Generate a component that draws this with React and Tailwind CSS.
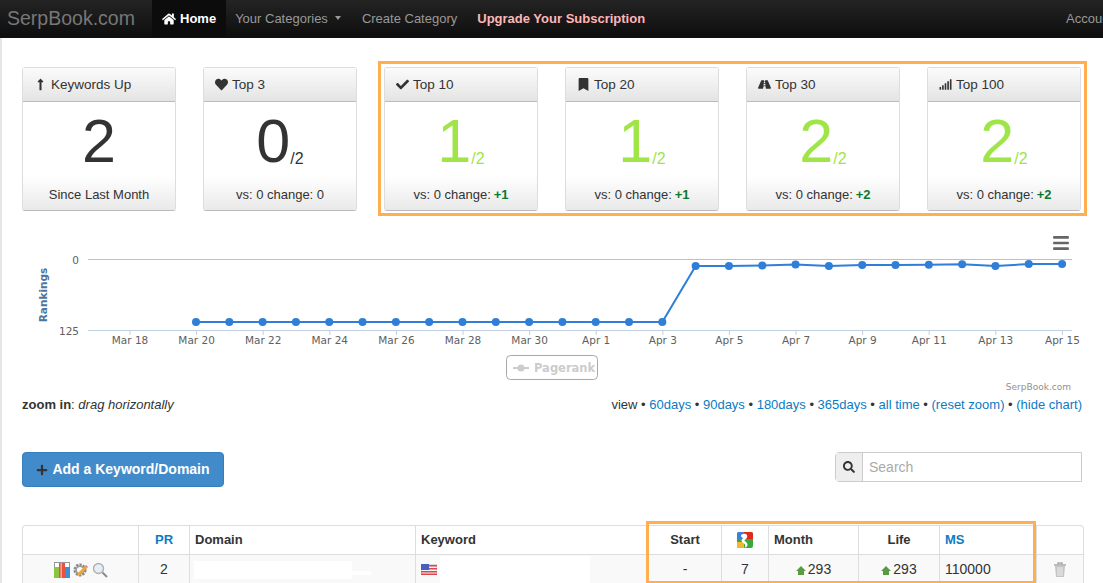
// App.jsx
// SerpBook dashboard: nav, rank cards, rankings chart and keyword table.

import React from 'react';
import { FaBars, FaBookmark, FaCheck, FaHeart, FaHome, FaLongArrowAltUp, FaPlus, FaRoad, FaSearch, FaSignal } from 'react-icons/fa';

const cards = [
  { title: 'Keywords Up', icon: FaLongArrowAltUp, value: '2', footer: 'Since Last Month' },
  { title: 'Top 3', icon: FaHeart, value: '0', total: '/2', footer: 'vs: 0 change: 0' },
  { title: 'Top 10', icon: FaCheck, value: '1', total: '/2', footer: 'vs: 0 change: ', change: '+1', good: true },
  { title: 'Top 20', icon: FaBookmark, value: '1', total: '/2', footer: 'vs: 0 change: ', change: '+1', good: true },
  { title: 'Top 30', icon: FaRoad, value: '2', total: '/2', footer: 'vs: 0 change: ', change: '+2', good: true },
  { title: 'Top 100', icon: FaSignal, value: '2', total: '/2', footer: 'vs: 0 change: ', change: '+2', good: true },
];

const rankTail = [266, 266, 265.5, 264.5, 266, 265, 265, 264.7, 264.2, 266, 264, 264];
const points = [
  ...Array.from({ length: 15 }, () => 322),
  ...rankTail,
].map((y, i) => ({ x: 196 + i * 33.31, y }));

const dateLabels = ['Mar 18', 'Mar 20', 'Mar 22', 'Mar 24', 'Mar 26', 'Mar 28', 'Mar 30', 'Apr 1', 'Apr 3', 'Apr 5', 'Apr 7', 'Apr 9', 'Apr 11', 'Apr 13', 'Apr 15'];

const StatCard = ({ card }) => {
  const Icon = card.icon;
  return (
    <div className="w-[154px] h-[144px] flex flex-col rounded-[3px] border border-[#ddd] border-b-[#bbb] bg-white">
      <div className="h-[36px] flex items-center gap-[4px] pl-[11px] border-b border-[#bbb] bg-linear-to-b from-[#fbfbfb] to-[#e4e4e4] text-[13.5px] text-[#333]">
        <Icon className="text-[13px] text-[#333]" />
        <span>{card.title}</span>
      </div>
      <div className={`flex-1 flex items-start justify-center pt-[4px] ${card.good ? 'text-[#a0e547]' : 'text-[#333]'}`}>
        <span className="text-[61px] leading-[70px]">{card.value}</span>
        {card.total && <span className="text-[16px] mt-[41px]">{card.total}</span>}
      </div>
      <div className="h-[35px] flex items-center justify-center pt-[4px] bg-linear-to-b from-white to-[#e9e9e9] text-[13px] text-[#333]">
        {card.footer}
        {card.change && <span className="font-bold text-[#0a7a30] ml-[3px]">{card.change}</span>}
      </div>
    </div>
  );
};

const RankChart = () => (
  <svg viewBox="22 225 1060 170" className="block w-[1060px] h-[170px] mt-[14px]">
    <line x1="88" x2="1072" y1="259.5" y2="259.5" stroke="#c0c0c0" />
    <line x1="88" x2="1072" y1="330.5" y2="330.5" stroke="#c0d0e0" />
    <g fontFamily="'DejaVu Sans', sans-serif" fontSize="10.5" fill="#606060">
      <text x="79" y="264" textAnchor="end">0</text>
      <text x="79" y="335" textAnchor="end">125</text>
      {dateLabels.map((label, i) => {
        const x = 130 + i * 66.6;
        return (
          <g key={label}>
            <line x1={x} x2={x} y1="330" y2="335" stroke="#c0d0e0" />
            <text x={x} y="344" textAnchor="middle">{label}</text>
          </g>
        );
      })}
    </g>
    <text
      transform="translate(47 295) rotate(-90)"
      textAnchor="middle"
      fontFamily="'DejaVu Sans', sans-serif"
      fontSize="10.5"
      fontWeight="bold"
      fill="#4d759e"
    >
      Rankings
    </text>
    <polyline points={points.map((p) => `${p.x},${p.y}`).join(' ')} fill="none" stroke="#2f7ed8" strokeWidth="2" />
    {points.map((p) => (
      <circle key={p.x} cx={p.x} cy={p.y} r="4" fill="#2f7ed8" />
    ))}
    <rect x="506.5" y="355.5" width="91" height="24" rx="4" fill="white" stroke="#a8a8a8" />
    <line x1="513" x2="529" y1="368" y2="368" stroke="#ccc" strokeWidth="2" />
    <circle cx="521" cy="368" r="3.5" fill="#ccc" />
    <text x="534" y="372" fontFamily="'DejaVu Sans', sans-serif" fontSize="11.5" fontWeight="bold" fill="#ccc">Pagerank</text>
    <text x="1071" y="390" textAnchor="end" fontFamily="'DejaVu Sans', sans-serif" fontSize="9" fill="#909090">SerpBook.com</text>
    <foreignObject x="1052" y="234" width="18" height="16">
      <FaBars className="text-[18px] text-[#666]" />
    </foreignObject>
  </svg>
);

const ViewLinks = () => {
  const links = ['60days', '90days', '180days', '365days', 'all time', '(reset zoom)', '(hide chart)'];
  return (
    <div>
      view
      {links.map((link) => (
        <span key={link}>
          {' • '}
          <a className="text-[#0a7cc4]">{link}</a>
        </span>
      ))}
    </div>
  );
};

const BooksIcon = () => (
  <svg width="16" height="17" viewBox="0 0 16 17">
    <rect x="0.5" y="1.5" width="15" height="15" fill="white" stroke="#333" strokeDasharray="1 1" />
    <rect x="0" y="6" width="5" height="11" fill="#8cc63f" />
    <rect x="5" y="2" width="6" height="15" fill="#e8523f" />
    <rect x="6.5" y="2" width="1.5" height="15" fill="#f4a79b" />
    <rect x="11" y="6" width="5" height="11" fill="#3f8fd8" />
  </svg>
);

const GearIcon = () => (
  <svg width="16" height="16" viewBox="0 0 16 16">
    <circle cx="7" cy="8" r="5" fill="none" stroke="#8a8a8a" strokeWidth="3" strokeDasharray="2.2 1" />
    <circle cx="7" cy="8" r="3.8" fill="none" stroke="#9a9a9a" strokeWidth="1.5" />
    <path d="M4 14 L5 11 L12 4 L14 6 L7 13 Z" fill="#f0a830" />
    <path d="M12 4 L13 3 L15 5 L14 6 Z" fill="#e86a8a" />
  </svg>
);

const LensIcon = () => (
  <svg width="16" height="16" viewBox="0 0 16 16">
    <circle cx="6.5" cy="6.5" r="5" fill="#e4eef6" stroke="#b0b0b0" strokeWidth="1.4" />
    <line x1="10.5" y1="10.5" x2="15" y2="15" stroke="#8c8c8c" strokeWidth="2" />
  </svg>
);

const GoogleIcon = () => (
  <svg width="16" height="16" viewBox="0 0 16 16" className="mx-auto">
    <rect width="16" height="16" rx="2" fill="#3aa83a" />
    <path d="M0 2a2 2 0 0 1 2-2h5v7H0z" fill="#3b82d8" />
    <path d="M7 0h7a2 2 0 0 1 2 2v5H7z" fill="#e0281f" />
    <path d="M0 10h7v6H2a2 2 0 0 1-2-2z" fill="#f3b92e" />
    <path d="M6 2c3-1 5 1 4 3.500-.5 1.500-2.500 2-2.500 3s3 1.500 3 4c0 1.500-1 2.500-2 3h-1c1-1 1-2.500 0-3.500-1.500-1.500-3-2-3-3.500 0-1 1-2 2-2.500-1.500 0-2.500-1-2.500-2.500C4 3 5 2.300 6 2z" fill="white" />
  </svg>
);

const FlagIcon = () => (
  <svg width="16" height="11" viewBox="0 0 16 11" className="shrink-0">
    <rect width="16" height="11" fill="#f4f4f4" stroke="#999" strokeWidth="0.5" />
    <rect y="1" width="16" height="1.500" fill="#d8474f" />
    <rect y="4" width="16" height="1.500" fill="#d8474f" />
    <rect y="7" width="16" height="1.500" fill="#d8474f" />
    <rect y="9.500" width="16" height="1.500" fill="#d8474f" />
    <rect width="8" height="6" fill="#4a5fc0" />
  </svg>
);

const UpArrow = () => (
  <svg width="10" height="9" viewBox="0 0 10 9" className="inline-block mr-[2px]">
    <path d="M5 0 L10 5 H8 V9 H2 V5 H0 Z" fill="#5a9a44" />
  </svg>
);

const TrashIcon = () => (
  <svg width="14" height="15" viewBox="0 0 14 15" className="mx-auto">
    <path d="M1 3h12M5 3V1h4v2" fill="none" stroke="#aaa" strokeWidth="1.500" />
    <path d="M2 4h10l-1 11H3z" fill="#c4c4c4" />
    <path d="M5 5v9M7 5v9M9 5v9" stroke="#f4f4f4" strokeWidth="0.9" />
  </svg>
);

const KeywordTable = () => {
  const th = 'h-[29px] border-b border-r border-[#ddd] px-[5px] text-[13px] font-bold text-[#333]';
  const td = 'h-[29px] border-r border-[#ddd] px-[5px] text-[14px] text-[#333] text-center';
  return (
    <div className="relative mt-[38px]">
      <table className="w-[1060px] table-fixed border-separate border-spacing-0 border-t border-l border-r border-[#ddd] rounded-t-[4px]">
        <colgroup>
          <col className="w-[116px]" />
          <col className="w-[51px]" />
          <col className="w-[226px]" />
          <col className="w-[233px]" />
          <col className="w-[73px]" />
          <col className="w-[47px]" />
          <col className="w-[90px]" />
          <col className="w-[81px]" />
          <col className="w-[97px]" />
          <col className="w-[46px]" />
        </colgroup>
        <thead>
          <tr>
            <th className={th}></th>
            <th className={`${th} !text-[#0a7cc4] text-center`}>PR</th>
            <th className={`${th} text-left`}>Domain</th>
            <th className={`${th} text-left`}>Keyword</th>
            <th className={`${th} text-center`}>Start</th>
            <th className={th}><GoogleIcon /></th>
            <th className={`${th} text-left`}>Month</th>
            <th className={`${th} text-center`}>Life</th>
            <th className={`${th} !text-[#0a7cc4] text-left`}>MS</th>
            <th className="border-b border-[#ddd]"></th>
          </tr>
        </thead>
        <tbody className="bg-[#f9f9f9]">
          <tr>
            <td className={td}>
              <div className="flex items-center justify-center gap-[3px]">
                <BooksIcon />
                <GearIcon />
                <LensIcon />
              </div>
            </td>
            <td className={td}>2</td>
            <td className={`${td} !px-[4px]`}>
              <div className="flex items-end">
                <div className="w-[158px] h-[18px] bg-white" />
                <div className="w-[19px] h-[4px] bg-white mb-[4px]" />
              </div>
            </td>
            <td className={`${td} !px-[5px]`}>
              <div className="flex items-center gap-[3px]">
                <FlagIcon />
                <div className="w-[150px] h-[28px] bg-white" />
              </div>
            </td>
            <td className={td}>-</td>
            <td className={td}>7</td>
            <td className={td}><UpArrow />293</td>
            <td className={td}><UpArrow />293</td>
            <td className={`${td} text-left`}>110000</td>
            <td><TrashIcon /></td>
          </tr>
        </tbody>
      </table>
      {/* orange annotation drawn over the table columns */}
      <div className="absolute left-[624px] top-[-4px] w-[390px] h-[63px] border-[3px] border-[#ffae50]" />
    </div>
  );
};

const App = () => {
  return (
    <div className="w-[1103px] h-[583px] overflow-hidden bg-white font-['Liberation_Sans',Arial,sans-serif]">
      <nav className="h-[38px] flex items-center overflow-hidden whitespace-nowrap border-b border-[#111] bg-linear-to-b from-[#242424] to-[#0e0e0e] text-[13px] text-[#999]">
        <span className="w-[152px] shrink-0 pl-[7px] text-[19.500px] text-[#777]">SerpBook.com</span>
        <a className="h-full shrink-0 flex items-center gap-[4px] px-[10px] bg-[#0c0c0c] text-white font-bold"><FaHome className="text-[14px]" />Home</a>
        <a className="shrink-0 ml-[9px] flex items-center">
          Your Categories
          <span className="ml-[7px] mb-[1px] border-x-[3px] border-t-[4px] border-x-transparent border-t-[#999]" />
        </a>
        <a className="shrink-0 ml-[21px]">Create Category</a>
        <a className="shrink-0 ml-[20px] font-bold text-[#ffb6b6]">Upgrade Your Subscription</a>
        <a className="shrink-0 ml-[421px]">Account</a>
      </nav>
      <main className="border-l-2 border-[#e6e6e6] pl-[20px]">
        <div className="relative grid grid-cols-[repeat(6,154px)] gap-x-[27px] pt-[29px]">
          {cards.map((card) => (
            <StatCard key={card.title} card={card} />
          ))}
          {/* orange annotation around the Top 10-100 cards */}
          <div className="absolute left-[356px] top-[23px] w-[709px] h-[155px] border-[3px] border-[#ffae50]" />
        </div>
        <RankChart />
        <div className="h-[20px] flex items-center justify-between w-[1060px] text-[13px] text-[#333]">
          <div><b>zoom in</b>: <i>drag horizontally</i></div>
          <ViewLinks />
        </div>
        <div className="flex items-start justify-between w-[1060px] mt-[37px]">
          <button className="w-[202px] h-[35px] flex items-center justify-center gap-[4px] rounded-[4px] border border-[#357ebd] bg-[#428bca] text-[14px] font-bold text-white">
            <FaPlus className="text-[12px] text-[#333]" />
            Add a Keyword/Domain
          </button>
          <div className="w-[247px] h-[30px] flex rounded-l-[4px] border border-[#ccc]">
            <span className="w-[27px] flex items-center justify-center border-r border-[#ccc] bg-[#eee] text-[#333]">
              <FaSearch className="text-[12px]" />
            </span>
            <input placeholder="Search" className="flex-1 min-w-0 px-[6px] text-[14px] outline-none placeholder:text-[#aaa]" />
          </div>
        </div>
        <KeywordTable />
      </main>
    </div>
  );
};

export default App;
